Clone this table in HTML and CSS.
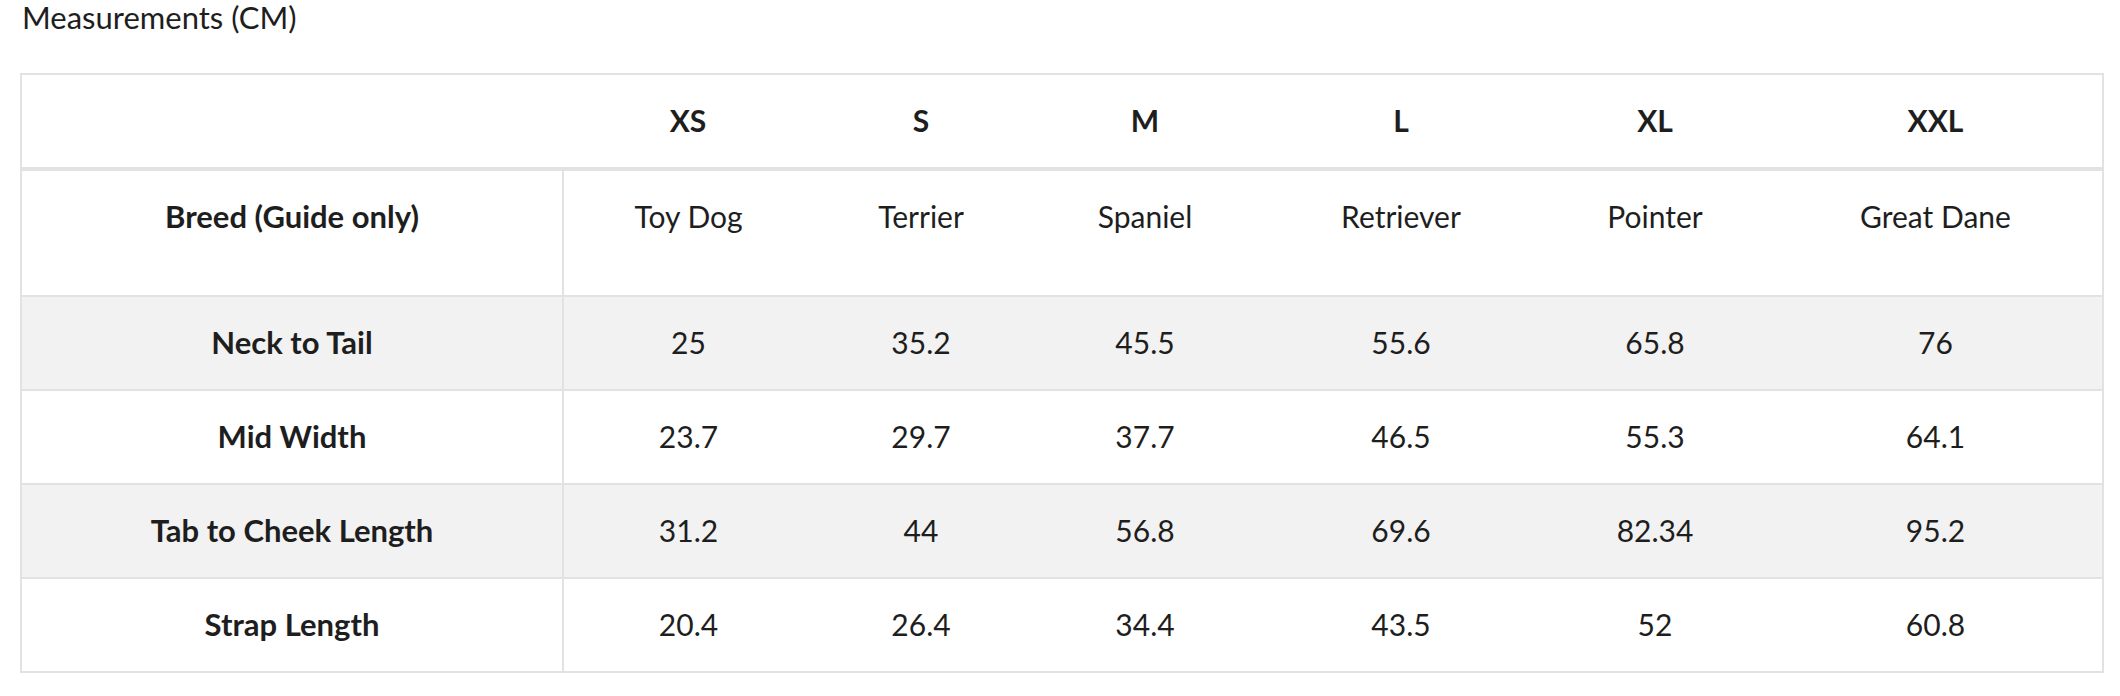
FILE: index.html
```html
<!DOCTYPE html>
<html lang="en">
<head>
<meta charset="utf-8">
<title>Measurements (CM)</title>
<link rel="stylesheet" href="styles.css">
</head>
<body>
<div class="page">
  <h2 class="title">Measurements (CM)</h2>
  <table class="size-table">
    <colgroup>
      <col class="c-label">
      <col class="c-xs">
      <col class="c-s">
      <col class="c-m">
      <col class="c-l">
      <col class="c-xl">
      <col class="c-xxl">
    </colgroup>
    <thead>
      <tr>
        <th></th>
        <th>XS</th>
        <th>S</th>
        <th>M</th>
        <th>L</th>
        <th>XL</th>
        <th>XXL</th>
      </tr>
    </thead>
    <tbody>
      <tr class="breed">
        <td class="label">Breed (Guide only)</td>
        <td>Toy Dog</td>
        <td>Terrier</td>
        <td>Spaniel</td>
        <td>Retriever</td>
        <td>Pointer</td>
        <td>Great Dane</td>
      </tr>
      <tr>
        <td class="label">Neck to Tail</td>
        <td>25</td>
        <td>35.2</td>
        <td>45.5</td>
        <td>55.6</td>
        <td>65.8</td>
        <td>76</td>
      </tr>
      <tr>
        <td class="label">Mid Width</td>
        <td>23.7</td>
        <td>29.7</td>
        <td>37.7</td>
        <td>46.5</td>
        <td>55.3</td>
        <td>64.1</td>
      </tr>
      <tr>
        <td class="label">Tab to Cheek Length</td>
        <td>31.2</td>
        <td>44</td>
        <td>56.8</td>
        <td>69.6</td>
        <td>82.34</td>
        <td>95.2</td>
      </tr>
      <tr>
        <td class="label">Strap Length</td>
        <td>20.4</td>
        <td>26.4</td>
        <td>34.4</td>
        <td>43.5</td>
        <td>52</td>
        <td>60.8</td>
      </tr>
    </tbody>
  </table>
</div>
</body>
</html>
```
FILE: styles.css
```css
html, body {
  margin: 0;
  padding: 0;
  background: #ffffff;
}

body {
  font-family: Lato, "Liberation Sans", sans-serif;
  color: #1e1e1e;
}

.page {
  padding: 0 18px 0 20px;
}

.title {
  margin: 0 0 39px;
  padding: 0 0 0 2px;
  font-size: 31px;
  font-weight: 400;
  line-height: 34px;
  height: 34px;
}

.size-table {
  width: 100%;
  border-collapse: collapse;
  table-layout: fixed;
  border: 2px solid #e2e2e2;
  font-size: 30px;
}

.c-label { width: 542px; }
.c-xs { width: 250px; }
.c-s { width: 216px; }
.c-m { width: 232px; }
.c-l { width: 280px; }
.c-xl { width: 228px; }
.c-xxl { width: 334px; }

.size-table th,
.size-table td {
  text-align: center;
  vertical-align: top;
  padding: 26px 0 28px;
  line-height: 38px;
  height: 38px;
}

.size-table th {
  font-weight: 700;
  border-bottom: 4px solid #e2e2e2;
}

.size-table td {
  font-weight: 400;
  border-top: 2px solid #e2e2e2;
}

.size-table td.label {
  font-size: 31px;
  font-weight: 700;
  border-right: 2px solid #e2e2e2;
}

.size-table tr.breed td {
  padding-bottom: 60px;
}

.size-table tbody tr:nth-child(even) td {
  background: #f2f2f2;
}
```
